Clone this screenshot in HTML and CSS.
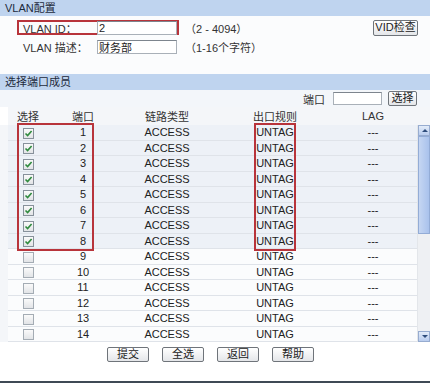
FILE: index.html
```html
<!DOCTYPE html>
<html lang="zh-CN">
<head>
  <meta charset="UTF-8" />
  <title>VLAN配置</title>
  <link rel="stylesheet" href="styles.css">
</head>
<body>
  <div class="bar">VLAN配置</div>

  <div class="panel">
    <div class="field-row">
      <div class="field mark">
        <label>VLAN ID：</label>
        <input type="text" value="2" />
      </div>
      <span class="hint">（2 - 4094）</span>
      <button class="btn vid-btn">VID检查</button>
    </div>
    <div class="field-row">
      <div class="field">
        <label>VLAN 描述：</label>
        <input type="text" value="财务部" />
      </div>
      <span class="hint">（1-16个字符）</span>
    </div>
  </div>

  <div class="bar">选择端口成员</div>

  <div class="filter">
    <span>端口</span>
    <input type="text" />
    <button class="btn">选择</button>
  </div>

  <div class="thead">
    <span>选择</span>
    <span>端口</span>
    <span>链路类型</span>
    <span>出口规则</span>
    <span>LAG</span>
  </div>

  <div class="tbody">
    <div class="rows" id="rows">
      <div class="red-box box-ports"></div>
      <div class="red-box box-rule"></div>
    </div>
    <div class="scroll">
      <div class="arrow up"></div>
      <div class="thumb"></div>
      <div class="track"></div>
      <div class="arrow down"></div>
    </div>
  </div>

  <div class="actions">
    <button class="btn">提交</button>
    <button class="btn">全选</button>
    <button class="btn">返回</button>
    <button class="btn">帮助</button>
  </div>

  <div class="footer-line"></div>

  <script>
    const rows = document.getElementById("rows");
    const check = '<svg width="9" height="9" viewBox="0 0 9 9"><path d="M1.5 4.5 L3.6 6.6 L7.6 2" fill="none" stroke="#2f8a3e" stroke-width="1.6"/></svg>';

    for (let i = 1; i <= 14; i++) {
      const on = i <= 8;
      const row = document.createElement("div");
      row.className = on ? "row picked" : "row";
      row.innerHTML =
        '<span><i class="cb">' + (on ? check : "") + '</i></span>' +
        '<span>' + i + '</span>' +
        '<span>ACCESS</span>' +
        '<span>UNTAG</span>' +
        '<span>---</span>';
      rows.appendChild(row);
    }
  </script>
</body>
</html>
```

FILE: styles.css
```css
body {
  margin: 0;
  width: 430px;
  height: 384px;
  overflow: hidden;
  background: #fff;
  font-family: "Liberation Sans", "Noto Sans CJK SC", sans-serif;
  font-size: 11px;
  color: #222;
}
.bar {
  height: 16px;
  line-height: 16px;
  padding-left: 5px;
  background: #bfd4ef;
  color: #1d2b3c;
  font-size: 11px;
}
.panel {
  height: 58px;
  box-sizing: border-box;
  padding-top: 4px;
  background: #fbfcfd;
}
.field-row {
  display: flex;
  align-items: center;
  height: 15px;
  margin-bottom: 4px;
}
.field {
  display: flex;
  align-items: center;
  margin-left: 17px;
  border: 2px solid transparent;
  height: 11px;
}
.field.mark {
  border-color: #b8343b;
}
.field label {
  width: 74px;
  padding-left: 4px;
  color: #333;
}
input {
  box-sizing: border-box;
  font-family: "Liberation Sans", "Noto Sans CJK SC", sans-serif;
  font-size: 11px;
  border: 1px solid #a9b0b8;
  border-top-color: #7d858e;
  background: #fff;
  padding: 0 1px;
  outline: none;
  color: #222;
}
.field input {
  width: 80px;
  height: 14px;
}
.hint {
  margin-left: 6px;
  color: #333;
}
.btn {
  box-sizing: border-box;
  height: 16px;
  padding: 0;
  font-family: "Liberation Sans", "Noto Sans CJK SC", sans-serif;
  font-size: 11px;
  line-height: 13px;
  white-space: nowrap;
  color: #222;
  border: 1px solid #6f747a;
  border-radius: 2px;
  background: linear-gradient(#ffffff, #e4e6e9);
  cursor: pointer;
}
.vid-btn {
  margin-left: auto;
  margin-right: 12px;
  width: 45px;
}
.filter {
  display: flex;
  align-items: center;
  justify-content: flex-end;
  height: 17px;
  padding-right: 13px;
  background: #f3f6fa;
}
.filter span {
  color: #333;
  margin-right: 8px;
}
.filter input {
  width: 49px;
  height: 13px;
  margin-right: 6px;
}
.filter .btn {
  width: 29px;
  height: 15px;
}
.thead,
.row {
  display: grid;
  grid-template-columns: 40px 70px 98px 118px 78px;
  margin-left: 8px;
  text-align: center;
  align-items: center;
}
.thead {
  height: 18px;
  background: #f4f6f9;
  color: #333;
}
.tbody {
  display: flex;
  background: #f4f6f9;
}
.rows {
  position: relative;
  width: 409px;
  margin-left: 8px;
}
.row {
  margin-left: 0;
  height: 15.5px;
  box-sizing: border-box;
  border-bottom: 1px solid #dfe3e9;
  background: #fbfcfd;
  color: #222;
}
.row.picked {
  background: #edf1f7;
}
.cb {
  display: inline-flex;
  align-items: center;
  justify-content: center;
  width: 11px;
  height: 11px;
  box-sizing: border-box;
  vertical-align: middle;
  border: 1px solid #a4acb4;
  background: linear-gradient(#fafafa, #e2e4e7);
}
.picked .cb {
  border-color: #87919b;
}
.red-box {
  position: absolute;
  top: -2px;
  height: 128px;
  box-sizing: border-box;
  border: 2px solid #b8343b;
}
.box-ports {
  left: 9px;
  width: 77px;
}
.box-rule {
  left: 246px;
  width: 42px;
}
.scroll {
  width: 13px;
  display: flex;
  flex-direction: column;
  background: #eef0f3;
  border-left: 1px solid #e3e6ea;
  box-sizing: border-box;
}
.arrow {
  height: 9px;
  border: 1px solid #97acd0;
  background: linear-gradient(#e3ecf9, #b9cdef);
  position: relative;
}
.arrow::after {
  content: "";
  position: absolute;
  left: 3px;
  top: 3px;
  border-left: 3px solid transparent;
  border-right: 3px solid transparent;
}
.arrow.up::after {
  border-bottom: 3px solid #2f4d7c;
}
.arrow.down::after {
  border-top: 3px solid #2f4d7c;
}
.thumb {
  height: 96px;
  border: 1px solid #93acd6;
  background: linear-gradient(to right, #c5d6f2, #a9c2ec);
}
.track {
  flex: 1;
}
.actions {
  display: flex;
  gap: 13px;
  padding-left: 107px;
  margin-top: 5px;
}
.actions .btn {
  width: 42px;
  height: 15px;
}
.footer-line {
  margin-top: 19px;
  height: 2px;
  background: #3f4a55;
}
```
